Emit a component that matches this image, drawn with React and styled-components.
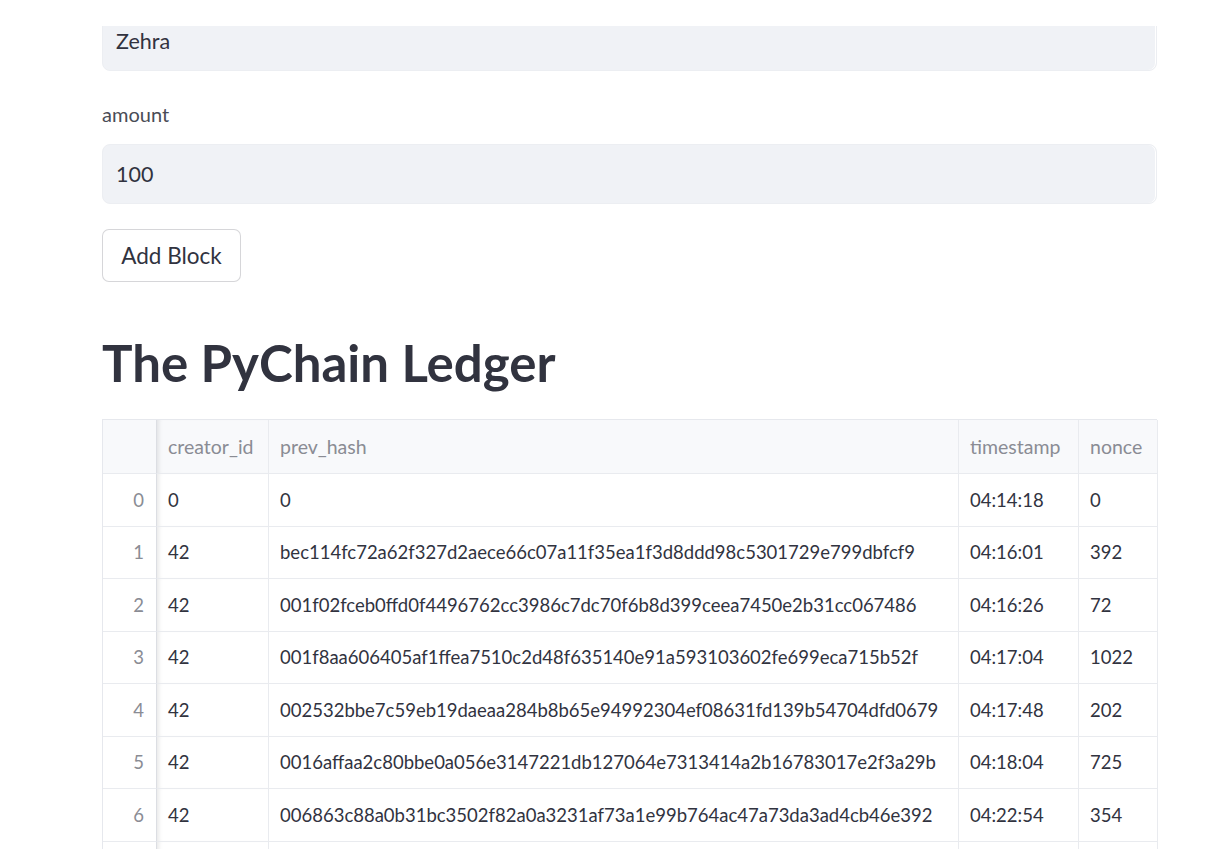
import React from "react";
import styled, { createGlobalStyle } from "styled-components";

const Global = createGlobalStyle`
  html, body { margin: 0; padding: 0; background: #ffffff; overflow: hidden; }
  body { font-family: "Lato", "Noto Sans", sans-serif; color: #31333f; }
  * { box-sizing: border-box; }
`;

const Page = styled.div`
  width: 1228px;
  height: 849px;
  overflow: hidden;
  display: flex;
  flex-direction: column;
`;

const TopBar = styled.div`
  height: 26px;
  flex: none;
  background: #ffffff;
`;

const Main = styled.main`
  padding-left: 102px;
  width: 1157px;
  display: flex;
  flex-direction: column;
`;

const ClipTop = styled.div`
  height: 45px;
  overflow: hidden;
  flex: none;
  & > * { margin-top: -15px; }
`;

const Field = styled.div`
  height: 60px;
  background: #f0f2f6;
  border: 1px solid #eceef2;
  box-shadow: inset -1px 0 0 #ffffff;
  border-radius: 8px;
  display: flex;
  align-items: center;
  padding: 0 13px;
  font-size: 21.5px;
  color: #31333f;
`;

const Label = styled.label`
  margin-top: 29px;
  height: 28px;
  line-height: 28px;
  font-size: 20px;
  color: #4a4c56;
  margin-bottom: 16px;
`;

const Button = styled.button`
  margin-top: 25px;
  align-self: flex-start;
  height: 53px;
  width: 139px;
  border: 1px solid rgba(49, 51, 63, 0.2);
  border-radius: 7px;
  background: #ffffff;
  font-family: inherit;
  font-size: 22.5px;
  color: #31333f;
  padding: 0;
  cursor: pointer;
`;

const Heading = styled.h1`
  margin: 48px 0 0;
  font-size: 51px;
  line-height: 65px;
  font-weight: 700;
  color: #31333f;
`;

const Table = styled.div`
  margin-top: 24px;
  width: 1055px;
  display: grid;
  grid-template-columns: 54px 112px 690px 120px 79px;
  border-top: 1px solid #e6e8ed;
  border-left: 1px solid #e6e8ed;
  font-size: 18.5px;
`;

const Cell = styled.div`
  height: ${(p) => (p.$head ? "54px" : "52.5px")};
  display: flex;
  align-items: center;
  justify-content: ${(p) => (p.$index ? "flex-end" : "flex-start")};
  padding: ${(p) => (p.$index ? "0 12px 0 0" : "0 0 0 11px")};
  border-right: 1px solid ${(p) => (p.$index ? "#dcdee3" : "#e9ebef")};
  border-bottom: 1px solid #e9ebef;
  background: ${(p) => (p.$head ? "#f8f9fb" : "#ffffff")};
  color: ${(p) => (p.$head || p.$index ? "#8a8c94" : "#31333f")};
  font-size: ${(p) => (p.$head ? "19.5px" : "inherit")};
  box-shadow: ${(p) => (p.$shadow ? "inset 5px 0 4px -3px rgba(0,0,0,0.09)" : "none")};
  white-space: nowrap;
  overflow: hidden;
`;

const columns = ["creator_id", "prev_hash", "timestamp", "nonce"];

const rows = [
  ["0", "0", "04:14:18", "0"],
  ["42", "bec114fc72a62f327d2aece66c07a11f35ea1f3d8ddd98c5301729e799dbfcf9", "04:16:01", "392"],
  ["42", "001f02fceb0ffd0f4496762cc3986c7dc70f6b8d399ceea7450e2b31cc067486", "04:16:26", "72"],
  ["42", "001f8aa606405af1ffea7510c2d48f635140e91a593103602fe699eca715b52f", "04:17:04", "1022"],
  ["42", "002532bbe7c59eb19daeaa284b8b65e94992304ef08631fd139b54704dfd0679", "04:17:48", "202"],
  ["42", "0016affaa2c80bbe0a056e3147221db127064e7313414a2b16783017e2f3a29b", "04:18:04", "725"],
  ["42", "006863c88a0b31bc3502f82a0a3231af73a1e99b764ac47a73da3ad4cb46e392", "04:22:54", "354"],
];

export default function App() {
  return (
    <Page>
      <Global />
      <TopBar />
      <Main>
        <ClipTop>
          <Field>Zehra</Field>
        </ClipTop>
        <Label>amount</Label>
        <Field>100</Field>
        <Button>Add Block</Button>
        <Heading>The PyChain Ledger</Heading>
        <Table>
          <Cell $head $index />
          {columns.map((c, i) => (
            <Cell key={c} $head $shadow={i === 0}>
              {c}
            </Cell>
          ))}
          {rows.map((r, ri) => (
            <React.Fragment key={ri}>
              <Cell $index>{ri}</Cell>
              {r.map((v, ci) => (
                <Cell key={ci} $shadow={ci === 0}>
                  {v}
                </Cell>
              ))}
            </React.Fragment>
          ))}
          <Cell $index />
          {columns.map((c, i) => (
            <Cell key={"next-" + c} $shadow={i === 0} />
          ))}
        </Table>
      </Main>
    </Page>
  );
}
